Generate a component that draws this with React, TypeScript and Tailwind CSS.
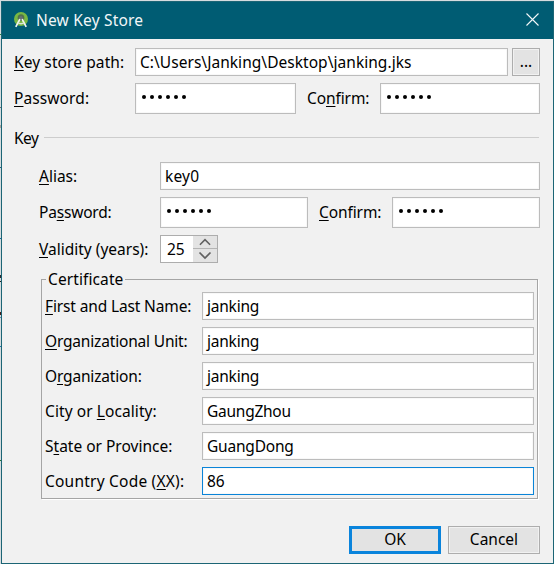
import React from "react";

type LabelProps = { text: string; mark?: number; className?: string };

/* A caption with its mnemonic letter underlined. */
function Label({ text, mark = -1, className = "" }: LabelProps) {
  return (
    <label className={`block shrink-0 whitespace-nowrap ${className}`}>
      {mark < 0 ? (
        text
      ) : (
        <>
          {text.slice(0, mark)}
          <span className="underline decoration-1 underline-offset-2 [text-decoration-skip-ink:none]">{text[mark]}</span>
          {text.slice(mark + 1)}
        </>
      )}
    </label>
  );
}

function Field({ value, className = "", focused = false }: { value: string; className?: string; focused?: boolean }) {
  return (
    <div
      className={`flex h-7 items-center whitespace-nowrap border bg-white pl-1 shadow-[inset_0_0_0_1px_#f8f8f8] ${
        focused ? "border-[#0a84d8]" : "border-[#bcbcbc]"
      } ${className}`}
    >
      {value}
    </div>
  );
}

function Secret({ className = "" }: { className?: string }) {
  return (
    <div className={`flex h-[31px] gap-1 border border-[#bcbcbc] bg-white pl-[6px] pt-[11px] shadow-[inset_0_0_0_1px_#f8f8f8] ${className}`}>
      {[0, 1, 2, 3, 4, 5].map((i) => (
        <span key={i} className="size-1 rounded-full bg-black" />
      ))}
    </div>
  );
}

const certificate = [
  { text: "First and Last Name:", mark: 0, value: "janking", track: "tracking-[-0.14px]", valueTrack: "tracking-[-0.22px]" },
  { text: "Organizational Unit:", mark: 0, value: "janking", track: "tracking-[-0.18px]", valueTrack: "tracking-[-0.22px]" },
  { text: "Organization:", mark: 1, value: "janking", track: "tracking-[-0.17px]", valueTrack: "tracking-[-0.22px]" },
  { text: "City or Locality:", mark: 8, value: "GaungZhou", track: "tracking-[0.08px]", valueTrack: "tracking-[-0.25px]" },
  { text: "State or Province:", mark: 1, value: "GuangDong", track: "", valueTrack: "tracking-[-0.2px]" },
  { text: "Country Code (XX):", mark: 14, value: "86", track: "tracking-[0.22px]", valueTrack: "" },
];

/* Slivers of the window behind, as gap above and colour. */
const slivers = [
  { gap: "mt-[33px]", tone: "h-px bg-[#2f8a3a]" },
  { gap: "mt-[72px]", tone: "h-px bg-[#6b6f72]" },
  { gap: "mt-[17px]", tone: "h-[3px] bg-[#a9a59f]" },
  { gap: "mt-[39px]", tone: "h-px bg-[#26647f]" },
  { gap: "mt-[70px]", tone: "h-px bg-[#1b6c9c]" },
  { gap: "mt-[36px]", tone: "h-[3px] bg-[#2b2b31]" },
  { gap: "mt-[3px]", tone: "h-px bg-[#202020]" },
  { gap: "mt-[30px]", tone: "h-[3px] bg-[#451c18]" },
  { gap: "mt-[2px]", tone: "h-px bg-[#5d8bb0]" },
  { gap: "mt-[28px]", tone: "h-px bg-[#2479a8]" },
  { gap: "mt-[113px]", tone: "h-px bg-[#1f7a2c]" },
];

export default function App() {
  return (
    <div className="flex h-[564px] w-[554px] bg-[#d6dcdf] pt-px font-['Noto_Sans',sans-serif] text-[15.5px] leading-5 text-black">
      <div className="flex w-px shrink-0 flex-col">
        {slivers.map((s, i) => (
          <div key={i} className={`${s.gap} ${s.tone}`} />
        ))}
      </div>
      <div className="flex h-[563px] w-[553px] flex-col border border-[#1c6575] bg-[#f1f1f1]">
        <header className="flex h-[37px] shrink-0 items-center bg-[#005c73] pb-[2px] pl-3 pr-[14px] text-[#f2f7f8]">
          <svg width="14" height="16" viewBox="0 0 14 16" className="mt-px shrink-0">
            <circle cx="7" cy="7" r="7" fill="#78b843" />
            <path d="M3.700 6.500a3.400 3.400 0 1 1 6.600 0L9 9H5z" fill="#52724c" />
            <path d="M6 7 1.800 14.800M8 7l4.200 7.800" stroke="#f2f5f1" strokeWidth="1.7" />
            <path d="M3.500 10.500q3.500 2.500 7 0" stroke="#dce5d8" strokeWidth="1.3" fill="none" />
            <circle cx="7" cy="5.800" r="1.700" fill="#68707a" />
          </svg>
          <span className="ml-2 tracking-[0.2px]">New Key Store</span>
          <svg width="13" height="13" viewBox="0 0 13 13" className="ml-auto" stroke="#f4f8f9" strokeWidth="1.1">
            <path d="M.5.5l12 12M12.5.5l-12 12" />
          </svg>
        </header>

        <div className="flex items-center pl-3 pt-[9px]">
          <Label text="Key store path:" mark={0} className="w-[121px] tracking-[0.1px]" />
          <Field value="C:\Users\Janking\Desktop\janking.jks" className="w-[373px] tracking-[0.04px]" />
          <button className="ml-1 h-7 w-7 border border-[#adadad] bg-[#e3e3e3] leading-none shadow-[inset_0_0_0_1px_#f1f1f1]">...</button>
        </div>

        <div className="mt-[7px] flex items-center pl-3">
          <Label text="Password:" mark={0} className="mb-[2px] w-[121px] tracking-[0.1px]" />
          <Secret className="w-[161px]" />
          <Label text="Confirm:" mark={2} className="mb-[2px] ml-[11px] w-[73px] tracking-[-0.1px]" />
          <Secret className="w-40" />
        </div>

        <div className="mt-[14px] flex h-5 items-center pl-3">
          <Label text="Key" className="w-[30px] tracking-[-0.5px]" />
          <div className="mb-[2px] h-px w-[495px] bg-[#cdcdcd]" />
        </div>

        <div className="mt-[14px] flex items-center pl-[37px]">
          <Label text="Alias:" mark={0} className="w-[121px]" />
          <Field value="key0" className="w-[380px] tracking-[0.2px]" />
        </div>

        <div className="mt-[7px] flex items-center pl-[37px]">
          <Label text="Password:" mark={2} className="mb-[2px] w-[121px] tracking-[-0.2px]" />
          <Secret className="w-[148px]" />
          <Label text="Confirm:" mark={0} className="mb-[2px] ml-[11px] w-[73px] tracking-[-0.1px]" />
          <Secret className="w-[148px]" />
        </div>

        <div className="mt-[7px] flex items-center pl-[37px]">
          <Label text="Validity (years):" mark={0} className="w-[121px]" />
          <div className="flex h-7 w-[58px] border border-[#adadad] bg-white">
            <span className="w-8 pl-[6px] leading-[26px]">25</span>
            <div className="flex flex-1 flex-col divide-y divide-[#b4b4b4] bg-[#e3e3e3]">
              <svg viewBox="0 0 24 13" className="h-[13px] w-6" fill="none" stroke="#606060" strokeWidth="1.7">
                <path d="M6.5 9.5 12 4l5.500 5.500" />
              </svg>
              <svg viewBox="0 0 24 13" className="h-[13px] w-6" fill="none" stroke="#606060" strokeWidth="1.7">
                <path d="M6.500 3.500 12 9l5.500-5.500" />
              </svg>
            </div>
          </div>
        </div>

        <fieldset className="ml-[39px] mt-[6px] h-[230px] w-[497px] border border-[#a5a5a5] pl-[3px] shadow-[1px_1px_0_#fff]">
          <legend className="ml-[1px] h-5 px-[2px] tracking-[0.1px]">Certificate</legend>
          <div className="mt-[3px] flex flex-col gap-[7px]">
            {certificate.map((row) => (
              <div key={row.text} className="flex items-center">
                <Label text={row.text} mark={row.mark} className={`w-[157px] ${row.track}`} />
                <Field value={row.value} focused={row.value === "86"} className={`w-[332px] ${row.valueTrack}`} />
              </div>
            ))}
          </div>
        </fieldset>

        <footer className="mt-[27px] flex gap-[7px] pl-[347px]">
          <button className="h-7 w-[92px] border-[3px] border-[#0a84dc] bg-[#e3e3e3] pb-[2px] leading-5">OK</button>
          <button className="h-7 w-[92px] border border-[#adadad] bg-[#e3e3e3] pb-[2px] shadow-[inset_0_0_0_1px_#f1f1f1]">Cancel</button>
        </footer>
      </div>
    </div>
  );
}
